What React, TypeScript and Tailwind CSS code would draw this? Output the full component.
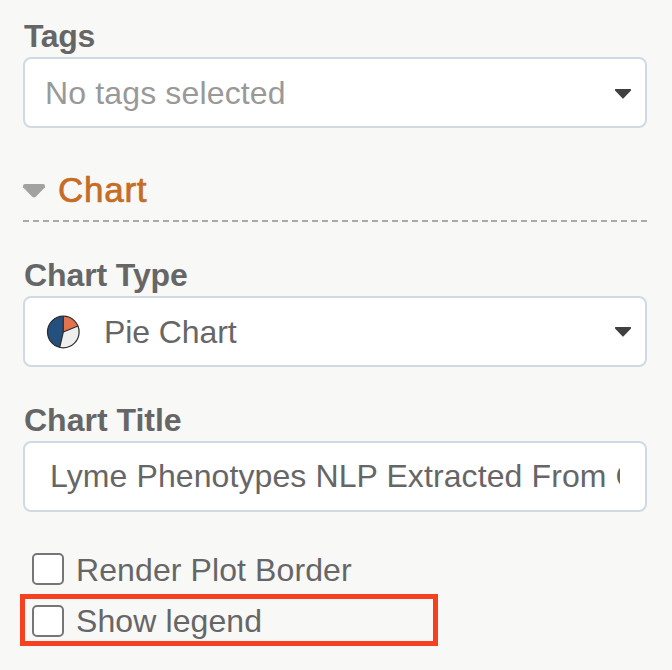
import type { ReactNode } from "react";

function Label({ children, className = "" }: { children: ReactNode; className?: string }) {
  return (
    <div className={"whitespace-nowrap pl-px text-[32px] leading-[40px] font-bold " + className}>
      {children}
    </div>
  );
}

function Field({ children, className = "" }: { children: ReactNode; className?: string }) {
  return (
    <div
      className={
        "mt-px flex h-[71px] w-[624px] items-center rounded-[8px] border-2 border-[#d0dae3] bg-white whitespace-nowrap " +
        className
      }
    >
      {children}
    </div>
  );
}

function Caret({ className = "" }: { className?: string }) {
  return (
    <svg className={"ml-auto h-[10px] w-4 shrink-0 " + className} viewBox="0 0 16 10">
      <path d="M.4 0H15.6Q16 0 16 .5V1.5L8.6 9.3Q8 10 7.4 9.3L0 1.5V.5Q0 0 .4 0Z" fill="#404040" />
    </svg>
  );
}

function PieIcon() {
  return (
    <svg className="ml-[21px] size-[34px] shrink-0" viewBox="0 0 34 34">
      <circle cx="17.3" cy="17" r="15.8" fill="#eeeeee" />
      <path d="M17.3 17V1.2A15.8 15.8 0 0 1 31.9 11Z" fill="#e2734d" />
      <path d="M17.3 17L13.7 32.4A15.8 15.8 0 0 1 17.3 1.2Z" fill="#24507f" />
      <path d="M17.3 1.2V17L13.7 32.4M17.3 17L31.9 11" fill="none" stroke="#2b2b2b" strokeWidth="1.2" />
      <circle cx="17.3" cy="17" r="15.8" fill="none" stroke="#2b2b2b" strokeWidth="1.2" />
    </svg>
  );
}

function CheckBox() {
  return <span className="size-8 shrink-0 rounded-[5px] border-2 border-[#767676] bg-white" />;
}

export default function App() {
  return (
    <main className="h-[670px] w-[672px] overflow-hidden bg-[#f8f8f7] pt-4 pl-[23px] font-['Liberation_Sans',Arial,sans-serif] text-[32px] leading-[40px] text-[#666]">
      <Label className="tracking-[-0.3px]">Tags</Label>
      <Field>
        <span className="pl-5 tracking-[0.15px] text-[#999]">No tags selected</span>
        <Caret className="mt-[2px] mr-[14px]" />
      </Field>

      <div className="mt-[37px] flex h-[50px] items-center">
        <svg className="mt-px mr-3 h-[14px] w-[23px]" viewBox="0 0 23 14">
          <path d="M2 0H20Q22 0 22 2V3.2L12.8 12.8Q11 14.4 9.2 12.8L0 3.2V2Q0 0 2 0Z" fill="#a2a2a2" />
        </svg>
        <span className="text-[35px] tracking-[0.75px] text-[#c66c25] [-webkit-text-stroke:0.7px_#c66c25]">
          Chart
        </span>
      </div>
      <div className="mt-[5px] h-[2px] w-[624px] bg-[repeating-linear-gradient(90deg,#aaa_0px,#aaa_6px,transparent_6px,transparent_9.968px)]" />

      <Label className="mt-[33px] tracking-[-0.1px]">Chart Type</Label>
      <Field>
        <PieIcon />
        <span className="ml-6 tracking-[-0.1px]">Pie Chart</span>
        <Caret className="mr-[14px]" />
      </Field>

      <Label className="mt-[33px]">Chart Title</Label>
      <Field className="pr-[25px] pl-[25px]">
        <span className="mb-[2px] min-w-0 flex-1 overflow-hidden tracking-[0.1px]">
          Lyme Phenotypes NLP Extracted From C
        </span>
      </Field>

      <label className="mt-[33px] ml-[9px] flex h-[49px] items-start">
        <span className="mt-2 flex">
          <CheckBox />
        </span>
        <span className="mt-[5px] ml-3 tracking-[0.1px]">Render Plot Border</span>
      </label>
      <label className="-ml-[3px] flex h-[52px] w-[418px] items-center border-[5px] border-[#f5411f] pl-[7px]">
        <span className="mt-[2px] flex">
          <CheckBox />
        </span>
        <span className="mt-px ml-3 tracking-[0.1px]">Show legend</span>
      </label>
    </main>
  );
}
